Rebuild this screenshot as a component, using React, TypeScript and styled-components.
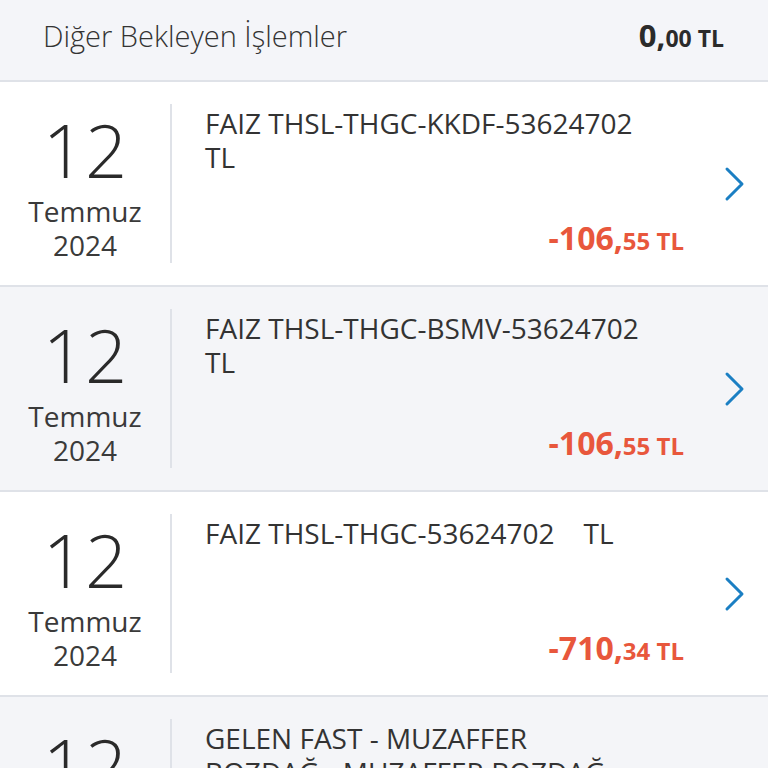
import React from "react";
import styled, { createGlobalStyle } from "styled-components";

const GlobalStyle = createGlobalStyle`
  html, body {
    margin: 0;
    padding: 0;
    background: #ffffff;
    overflow: hidden;
  }
  body {
    font-family: "Open Sans", "Noto Sans", sans-serif;
    color: #333333;
  }
`;

type Item = {
  day: string;
  month: string;
  year: string;
  title: string;
  whole: string;
  cents: string;
};

const items: Item[] = [
  { day: "12", month: "Temmuz", year: "2024", title: "FAIZ THSL-THGC-KKDF-53624702 TL", whole: "-106,", cents: "55" },
  { day: "12", month: "Temmuz", year: "2024", title: "FAIZ THSL-THGC-BSMV-53624702 TL", whole: "-106,", cents: "55" },
  { day: "12", month: "Temmuz", year: "2024", title: "FAIZ THSL-THGC-53624702\u00a0\u00a0\u00a0\u00a0TL", whole: "-710,", cents: "34" },
  { day: "12", month: "Temmuz", year: "2024", title: "GELEN FAST - MUZAFFER BOZDAĞ - MUZAFFER BOZDAĞ", whole: "-0,", cents: "00" },
];

const Page = styled.div`
  display: flex;
  flex-direction: column;
  width: 768px;
`;

const Header = styled.div`
  height: 70px;
  padding: 0 44px 10px 43px;
  display: flex;
  align-items: center;
  justify-content: space-between;
  background: #f4f5f9;
  border-bottom: 2px solid #dfe2e8;
`;

const HeaderTitle = styled.span`
  font-size: 29px;
  font-weight: 300;
  color: #333333;
`;

const Total = styled.span`
  font-size: 31px;
  font-weight: 700;
  color: #2b2b2b;
`;

const Small = styled.span<{ $size?: number }>`
  font-size: ${(p) => p.$size ?? 23}px;
`;

const Row = styled.div<{ $alt: boolean }>`
  height: 205px;
  box-sizing: border-box;
  padding: 22px 0;
  display: flex;
  background: ${(p) => (p.$alt ? "#f4f5f8" : "#ffffff")};
  border-bottom: 2px solid #dfe2e8;
`;

const DateCol = styled.div`
  width: 170px;
  flex-shrink: 0;
  display: flex;
  flex-direction: column;
  align-items: center;
  justify-content: center;
  border-right: 2px solid #dfe2e8;
`;

const Day = styled.div`
  font-size: 74px;
  font-weight: 300;
  line-height: 88px;
  color: #2a2a2a;
`;

const DateLine = styled.div`
  font-size: 28px;
  font-weight: 400;
  line-height: 34px;
  color: #3a3a3a;
`;

const Content = styled.div`
  flex: 1;
  padding: 2px 0 0 33px;
  display: flex;
  flex-direction: column;
  justify-content: space-between;
  min-width: 0;
`;

const Title = styled.div`
  font-size: 28px;
  font-weight: 400;
  line-height: 34px;
  color: #333333;
  max-width: 438px;
`;

const Amount = styled.div`
  align-self: flex-end;
  font-size: 32px;
  font-weight: 700;
  line-height: 36px;
  color: #e8573c;
  padding-bottom: 4px;
`;

const Arrow = styled.div`
  width: 84px;
  flex-shrink: 0;
  display: flex;
  align-items: center;
  justify-content: center;
  color: #1b7fc3;
  padding-left: 18px;
  box-sizing: border-box;
`;

const Chevron = () => (
  <svg width="22" height="36" viewBox="0 0 22 36" fill="none">
    <path d="M3 3 L18 18 L3 33" stroke="currentColor" strokeWidth="3" strokeLinecap="round" strokeLinejoin="round" />
  </svg>
);

export default function App() {
  return (
    <>
      <GlobalStyle />
      <Page>
        <Header>
          <HeaderTitle>Diğer Bekleyen İşlemler</HeaderTitle>
          <Total>
            0,<Small>00 TL</Small>
          </Total>
        </Header>
        {items.map((it, i) => (
          <Row key={i} $alt={i % 2 === 1}>
            <DateCol>
              <Day>{it.day}</Day>
              <DateLine>{it.month}</DateLine>
              <DateLine>{it.year}</DateLine>
            </DateCol>
            <Content>
              <Title>{it.title}</Title>
              <Amount>
                {it.whole}
                <Small $size={24}>{it.cents} TL</Small>
              </Amount>
            </Content>
            <Arrow>
              <Chevron />
            </Arrow>
          </Row>
        ))}
      </Page>
    </>
  );
}
